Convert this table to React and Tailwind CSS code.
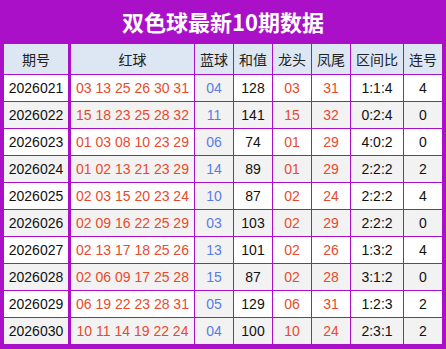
import React from "react";

const rows = [
  ["2026021", "03 13 25 26 30 31", "04", "128", "03", "31", "1:1:4", "4"],
  ["2026022", "15 18 23 25 28 32", "11", "141", "15", "32", "0:2:4", "0"],
  ["2026023", "01 03 08 10 23 29", "06", "74", "01", "29", "4:0:2", "0"],
  ["2026024", "01 02 13 21 23 29", "14", "89", "01", "29", "2:2:2", "2"],
  ["2026025", "02 03 15 20 23 24", "10", "87", "02", "24", "2:2:2", "4"],
  ["2026026", "02 09 16 22 25 29", "03", "103", "02", "29", "2:2:2", "0"],
  ["2026027", "02 13 17 18 25 26", "13", "101", "02", "26", "1:3:2", "4"],
  ["2026028", "02 06 09 17 25 28", "15", "87", "02", "28", "3:1:2", "0"],
  ["2026029", "06 19 22 23 28 31", "05", "129", "06", "31", "1:2:3", "2"],
  ["2026030", "10 11 14 19 22 24", "04", "100", "10", "24", "2:3:1", "2"],
];

const cols = "grid grid-cols-[64px_126px_39px_39px_39px_39px_53px_39px]";
const font = { };

export default function App() {
  return (
    <div className="w-[446px] h-[349px] bg-[#aa10c8] px-[4px] pb-[5px] font-['Liberation_Sans','Noto_Sans_CJK_SC',sans-serif] text-[14px]">
      <div className="h-[44px] flex items-center justify-center text-white font-bold text-[22px] font-['Noto_Sans_CJK_SC','Liberation_Sans',sans-serif] leading-none pb-[2px]">
        双色球最新10期数据
      </div>
      <div className={`${cols} h-[30px] bg-[#dde7f4] text-[#222] font-['Noto_Sans_CJK_SC',sans-serif]`}>
        <div className="flex items-center justify-center">期号</div>
        <div className="flex items-center justify-center border-l-[3px] border-[#aa10c8]">红球</div>
        <div className="flex items-center justify-center border-l border-[#aa10c8]">蓝球</div>
        <div className="flex items-center justify-center border-l border-[#aa10c8]">和值</div>
        <div className="flex items-center justify-center border-l border-[#aa10c8]">龙头</div>
        <div className="flex items-center justify-center border-l border-[#aa10c8]">凤尾</div>
        <div className="flex items-center justify-center border-l border-[#aa10c8]">区间比</div>
        <div className="flex items-center justify-center border-l border-[#aa10c8]">连号</div>
      </div>
      {rows.map((r, i) => (
        <div
          key={r[0]}
          className={`${cols} h-[27px] border-t border-[#aa10c8] ${i % 2 === 1 ? "bg-[#f2f2f2]" : "bg-white"} text-[#111]`}
        >
          <div className="flex items-center justify-center">{r[0]}</div>
          <div className="flex items-center justify-center border-l-[3px] border-[#aa10c8] text-[#e84a2c] whitespace-pre">{r[1]}</div>
          <div className="flex items-center justify-center border-l border-[#aa10c8] bg-[#f2f2f2] text-[#5a7ce6]">{r[2]}</div>
          <div className="flex items-center justify-center border-l border-[#aa10c8]">{r[3]}</div>
          <div className="flex items-center justify-center border-l border-[#aa10c8] text-[#e84a2c]">{r[4]}</div>
          <div className="flex items-center justify-center border-l border-[#aa10c8] text-[#e84a2c]">{r[5]}</div>
          <div className="flex items-center justify-center border-l border-[#aa10c8]">{r[6]}</div>
          <div className="flex items-center justify-center border-l border-[#aa10c8]">{r[7]}</div>
        </div>
      ))}
    </div>
  );
}
